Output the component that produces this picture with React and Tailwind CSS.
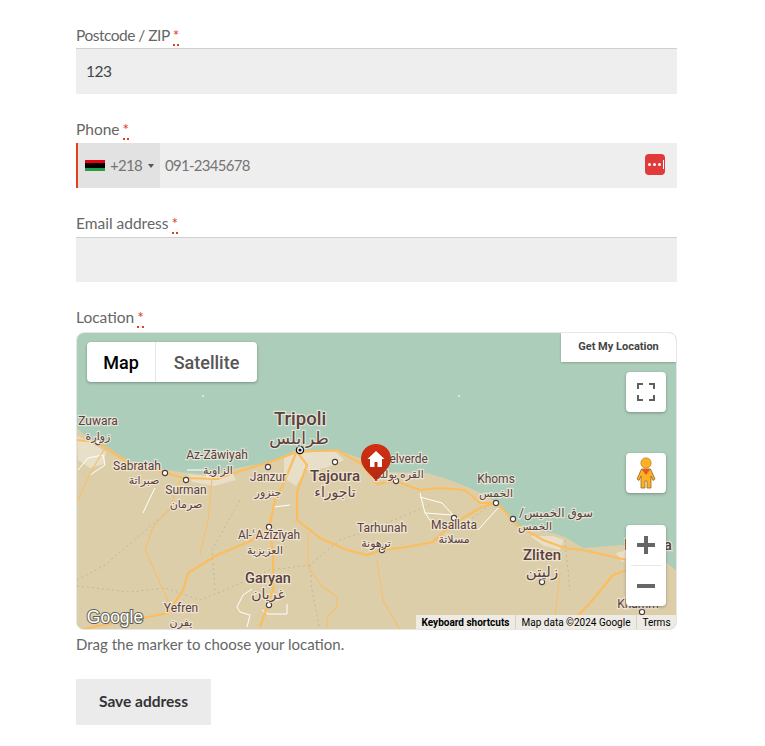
const LAND = 'M77 428L90 440L107 447L127 460L153 467L180 472L213 475L237 468L270 462L297 450L337 450L360 458L377 473L387 472L427 473L447 479L470 488L485 495L497 503L517 527L553 533L565 537L583 548L623 545L663 560L677 571V630H77Z';

const URBAN = [
  'M77 436L92 443L106 452L104 464L90 468L78 460Z',
  'M188 474L216 477L232 472L236 480L214 486L192 482Z',
  'M284 458L298 452L336 452L344 460L326 468L306 470L296 486L284 478Z',
  'M530 536L553 536L564 540L560 550L544 546Z',
  'M616 553L630 549L636 558L622 562Z',
];

const MAJOR_ROADS = [
  'M77 440L97 442L113 453L133 465L163 472L183 478L217 479L237 472L270 462L297 452',
  'M297 452L337 450L362 464L377 484L395 481L420 490L440 488L465 490L480 503L497 503L517 525L543 540L565 548L583 550L627 560',
  'M188 573L217 555L253 540L267 530',
  'M80 630L103 625L143 618L168 613L173 605L183 590L188 573',
  'M296 453L283 485L275 500L270 523L273 557L273 590L260 627',
  'M297 452L307 465L297 492L297 520L320 538L347 550L367 555L382 550L407 547L433 542L443 532L463 518L480 508L497 502',
  'M627 570L613 575L590 603L567 627',
];

const MINOR_ROADS = [
  'M170 605L145 550L153 527L170 508L180 480',
  'M308 533L308 567L323 587L337 597L337 607L327 617L327 630',
  'M377 560L383 600L400 630',
  'M560 573L555 617L553 630',
  'M106 446L92 470L78 500',
  'M212 480L208 520L200 555',
];

const BORDERS = [
  'M78 470L88 458L103 455L105 465L90 475',
  'M187 470L207 470L207 478L217 478',
  'M143 513L150 498L155 488',
  'M420 493L425 513L432 523M425 513L453 515L442 503L420 497',
  'M478 530L498 508',
  'M273 507L290 505',
  'M247 627L250 615L240 612L237 607L243 595L252 589',
  'M287 604L287 614L268 614L262 610',
];

const DASHED = [
  'M77 580L105 565L140 535L170 510',
  'M77 586L130 592L165 588L200 600L225 590L270 570L310 565L340 540L370 530L430 505',
  'M310 565L312 590L320 630',
  'M565 540L570 590',
  'M490 505L470 520',
  'M215 590L212 550L240 500',
];

const LABELS = [
  { t: 'Zuwara', x: 98, y: 425, s: 12 },
  { t: 'زوارة', x: 98, y: 440, s: 11 },
  { t: 'Tripoli', x: 300, y: 425, s: 18.500, w: 500 },
  { t: 'طرابلس', x: 299, y: 444, s: 17 },
  { t: 'Az-Zāwiyah', x: 217, y: 459, s: 12 },
  { t: 'الزاوية', x: 218, y: 474, s: 11 },
  { t: 'Sabratah', x: 137, y: 470, s: 12 },
  { t: 'صبراتة', x: 144, y: 484, s: 11 },
  { t: 'Surman', x: 186, y: 494, s: 12 },
  { t: 'صرمان', x: 186, y: 508, s: 11 },
  { t: 'Janzur', x: 268, y: 481, s: 12 },
  { t: 'جنزور', x: 268, y: 496, s: 11 },
  { t: 'Tajoura', x: 335, y: 481, s: 15, w: 500 },
  { t: 'تاجوراء', x: 335, y: 497, s: 14 },
  { t: 'Belverde', x: 405, y: 463, s: 12 },
  { t: 'القره بوللي', x: 398, y: 478, s: 11 },
  { t: 'Khoms', x: 496, y: 483, s: 12 },
  { t: 'الخمس', x: 496, y: 497, s: 11 },
  { t: 'سوق الخميس/', x: 556, y: 517, s: 12, rtl: true },
  { t: 'الخمس', x: 535, y: 530, s: 11 },
  { t: 'Tarhunah', x: 382, y: 532, s: 12 },
  { t: 'ترهونة', x: 376, y: 547, s: 11 },
  { t: 'Msallata', x: 454, y: 529, s: 12 },
  { t: 'مسلاتة', x: 454, y: 543, s: 11 },
  { t: 'Zliten', x: 542, y: 560, s: 15, w: 500 },
  { t: 'زليتن', x: 542, y: 577, s: 15 },
  { t: 'Misrata', x: 648, y: 550, s: 14, w: 500 },
  { t: 'Khamm', x: 638, y: 608, s: 12 },
  { t: 'Al-ʿAzīzīyah', x: 269, y: 539, s: 12 },
  { t: 'العزيزية', x: 265, y: 554, s: 11 },
  { t: 'Garyan', x: 268, y: 583, s: 14.500, w: 500 },
  { t: 'غريان', x: 268, y: 599, s: 14 },
  { t: 'Yefren', x: 181, y: 612, s: 12 },
  { t: 'يفرن', x: 181, y: 626, s: 11 },
];

const TOWNS = [
  [98, 442], [165, 473], [186, 480], [268, 467], [335, 462], [396, 481], [454, 518], [496, 503],
  [513, 519], [382, 550], [542, 582], [269, 527], [269, 605], [642, 612],
];

function Required() {
  return <abbr className="ml-[3px] text-[#e2401c] no-underline border-b-2 border-dotted border-[#e2401c]">*</abbr>;
}

function Label({ children, className = '', height = 'h-[22px]' }) {
  return (
    <label className={`block ${height} text-[15.5px] leading-[18px] text-[#666666] ${className}`}>
      {children}
      <Required />
    </label>
  );
}

function MapDrawing() {
  return (
    <svg viewBox="77 333 599 296" className="absolute inset-0 w-full h-full">
      <rect x="77" y="333" width="600" height="297" fill="#abcdb9" />
      <path d={LAND} fill="#dccea9" />
      {URBAN.map((d) => <path key={d} d={d} fill="#e8dfc8" />)}
      {DASHED.map((d) => <path key={d} d={d} fill="none" stroke="#bfb7a0" strokeWidth="1" strokeDasharray="2 3" />)}
      {BORDERS.map((d) => <path key={d} d={d} fill="none" stroke="#ffffff" strokeWidth="1" />)}
      {MINOR_ROADS.map((d) => <path key={d} d={d} fill="none" stroke="#f6bf6c" strokeWidth="1.100" />)}
      {MAJOR_ROADS.map((d) => <path key={d} d={d} fill="none" stroke="#fbbd5e" strokeWidth="2.200" />)}
      <circle cx="203" cy="396" r="1.300" fill="#d5e5da" />
      <circle cx="459" cy="396" r="1.300" fill="#d5e5da" />
      {TOWNS.map(([x, y]) => (
        <circle key={`${x}-${y}`} cx={x} cy={y} r="2.600" fill="#ffffff" stroke="#4d3c38" strokeWidth="1.100" />
      ))}
      <circle cx="300" cy="450" r="3.600" fill="#ffffff" stroke="#111111" strokeWidth="1.300" />
      <circle cx="300" cy="450" r="1.600" fill="#111111" />
      {LABELS.map((l) => (
        <text
          key={l.t + l.x}
          x={l.x}
          y={l.y}
          textAnchor="middle"
          direction={l.rtl ? 'rtl' : undefined}
          fontSize={l.s}
          fontWeight={l.w || 400}
          fill="#5b403c"
          stroke="#f3ece0"
          strokeOpacity="0.75"
          strokeWidth="2.400"
          className="[paint-order:stroke] font-['Roboto','DejaVu_Sans',sans-serif]"
        >
          {l.t}
        </text>
      ))}
      <text
        x="115"
        y="623"
        textAnchor="middle"
        fontSize="17.500"
        fontWeight="500"
        fill="#ffffff"
        stroke="#5f6058"
        strokeWidth="2"
        className="[paint-order:stroke] font-['Liberation_Sans',sans-serif]"
      >
        Google
      </text>
      <defs>
        <linearGradient id="pin" x1="0" y1="0" x2="0" y2="1">
          <stop offset="0" stopColor="#d32f12" />
          <stop offset="1" stopColor="#b22a14" />
        </linearGradient>
      </defs>
      <path d="M376 444C367.500 444 361 450.500 361 459C361 468 370 473 376 481C382 473 391 468 391 459C391 450.500 384.500 444 376 444Z" fill="url(#pin)" />
      <path d="M376 451L367.500 459H370V467H374.500V462H377.500V467H382V459H384.500Z" fill="#ffffff" />
    </svg>
  );
}

function Pegman() {
  return (
    <svg width="20" height="32" viewBox="0 0 20 32">
      <circle cx="10" cy="6" r="5.200" fill="#fdb022" stroke="#a8792a" strokeWidth="0.600" />
      <path d="M5.500 12H14.500L19 22L17 23.500L15 19L15 31H11V24H9V31H5V19L3 23.500L1 22Z" fill="#fdb022" stroke="#8f6a28" strokeWidth="0.800" />
      <path d="M5.500 12H14.500L10 18Z" fill="#e5582b" />
    </svg>
  );
}

function MapBox() {
  return (
    <div className="relative h-[298px] rounded-lg border border-[#e6e6e6] overflow-hidden font-['Roboto',sans-serif]">
      <MapDrawing />
      <div className="absolute left-[10px] top-[9px] flex h-10 bg-white rounded-sm shadow-[0_1px_3px_rgba(0,0,0,0.3)] text-[18px] font-medium">
        <div className="w-[69px] flex items-center justify-center text-black border-r border-[#e6e6e6]">Map</div>
        <div className="w-[101px] flex items-center justify-center text-[#565656]">Satellite</div>
      </div>
      <div className="absolute right-0 top-0 w-[115px] h-[29px] flex items-center justify-center bg-white text-[11px] font-bold text-[#444444] shadow-[0_1px_2px_rgba(0,0,0,0.2)]">Get My Location</div>
      <div className="absolute right-[10px] top-[39px] w-10 h-10 flex items-center justify-center bg-white rounded-sm shadow-[0_1px_3px_rgba(0,0,0,0.3)]">
        <svg width="18" height="18" viewBox="0 0 18 18" fill="none" stroke="#5f5f5f" strokeWidth="2">
          <path d="M1 6V1H6M12 1H17V6M17 12V17H12M6 17H1V12" />
        </svg>
      </div>
      <div className="absolute right-[10px] top-[120px] w-10 h-10 flex items-center justify-center bg-white rounded-sm shadow-[0_1px_3px_rgba(0,0,0,0.3)]">
        <Pegman />
      </div>
      <div className="absolute right-[10px] top-[192px] w-10 h-[81px] flex flex-col items-center bg-white rounded-sm shadow-[0_1px_3px_rgba(0,0,0,0.3)]">
        <div className="h-10 flex items-center justify-center">
          <svg width="18" height="18" viewBox="0 0 18 18" fill="#666666"><path d="M7 0H11V7H18V11H11V18H7V11H0V7H7Z" /></svg>
        </div>
        <div className="h-px w-[30px] bg-[#e6e6e6]" />
        <div className="h-10 flex items-center justify-center">
          <svg width="18" height="18" viewBox="0 0 18 18" fill="#666666"><path d="M0 7H18V11H0Z" /></svg>
        </div>
      </div>
      <div className="absolute right-0 bottom-0 h-[14px] flex items-center text-[10px] text-black bg-[#f2f2f2]/80">
        <div className="w-[100px] text-center font-bold border-r border-[#d8d2c0]">Keyboard shortcuts</div>
        <div className="w-[121px] text-center border-r border-[#d8d2c0]">Map data ©2024 Google</div>
        <div className="w-[39px] text-center">Terms</div>
      </div>
    </div>
  );
}

export default function App() {
  return (
    <div className="w-[765px] h-[746px] overflow-hidden bg-white font-['Lato',sans-serif]">
      <div className="w-[601px] ml-[76px] pt-[26px]">
        <div className="mb-[26px]">
          <Label className="tracking-[-0.5px]">Postcode / ZIP</Label>
          <div className="h-[46px] px-[10px] flex items-center bg-[#eeeeee] border-t border-[#d0d0d0] text-[15.5px] tracking-[-0.5px] text-[#43454b]">123</div>
        </div>

        <div className="mb-[26px]">
          <Label height="h-[23px]">Phone</Label>
          <div className="relative h-[45px] flex items-center bg-[#eeeeee] border-l-2 border-[#e2401c] text-[15px] tracking-[-0.7px] text-[#757575]">
            <div className="w-[82px] h-full flex items-center bg-[#e2e2e2] pl-[7px]">
              <div className="w-5 h-[11px] flex flex-col shrink-0">
                <div className="h-[3px] bg-[#e70013]" />
                <div className="h-[5px] bg-black" />
                <div className="h-[3px] bg-[#239e46]" />
              </div>
              <span className="ml-[5px]">+218</span>
              <div className="ml-[6px] border-x-[3px] border-x-transparent border-t-[4px] border-t-[#555555]" />
            </div>
            <span className="ml-[5px]">091-2345678</span>
            <div className="absolute right-[12px] top-[11px] w-5 h-[21px] rounded bg-[#e03a3a] flex items-center justify-end pr-[1px] gap-[2px]">
              <div className="w-[3px] h-[3px] rounded-full bg-white" />
              <div className="w-[3px] h-[3px] rounded-full bg-white" />
              <div className="w-[3px] h-[3px] rounded-full bg-white" />
              <div className="w-px h-[9px] bg-white" />
            </div>
          </div>
        </div>

        <div className="mb-[26px]">
          <Label height="h-[23px]">Email address</Label>
          <div className="h-[45px] bg-[#eeeeee] border-t border-[#d0d0d0]" />
        </div>

        <Label height="h-[24px]">Location</Label>
        <MapBox />
        <p className="mt-[3px] text-[15px] leading-[22px] text-[#666666]">Drag the marker to choose your location.</p>

        <button className="mt-6 block w-[135px] h-[46px] bg-[#ebebeb] text-[15.5px] font-bold text-[#333333]">Save address</button>
      </div>
    </div>
  );
}
